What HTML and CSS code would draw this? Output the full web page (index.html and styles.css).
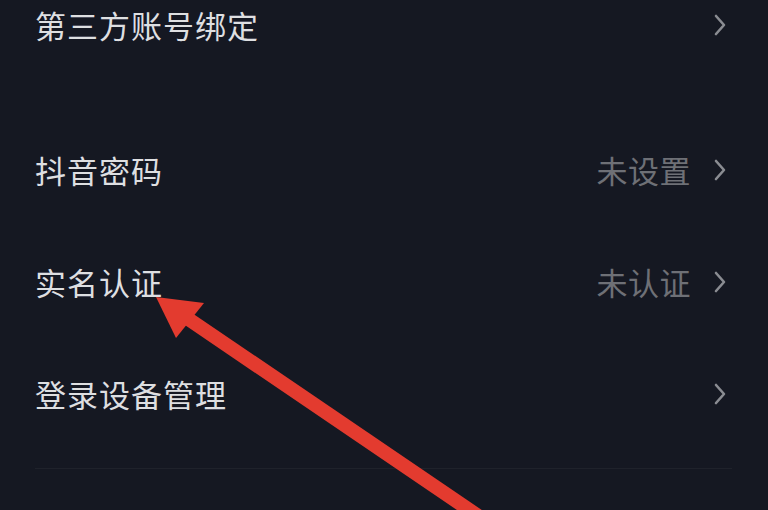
FILE: index.html
```html
<!DOCTYPE html>
<html lang="zh-CN">
<head>
<meta charset="utf-8">
<link rel="stylesheet" href="styles.css">
</head>
<body>
<div class="page">
  <div class="section">
    <div class="row">
      <span class="label">第三方账号绑定</span>
      <svg class="chev" viewBox="0 0 14 24" width="14" height="24"><path d="M3 3 L11 12 L3 21" fill="none" stroke="#8a8c92" stroke-width="2.6" stroke-linecap="round" stroke-linejoin="round"/></svg>
    </div>
  </div>
  <div class="gap"></div>
  <div class="section">
    <div class="row">
      <span class="label">抖音密码</span>
      <span class="value">未设置</span>
      <svg class="chev" viewBox="0 0 14 24" width="14" height="24"><path d="M3 3 L11 12 L3 21" fill="none" stroke="#8a8c92" stroke-width="2.6" stroke-linecap="round" stroke-linejoin="round"/></svg>
    </div>
    <div class="row">
      <span class="label">实名认证</span>
      <span class="value">未认证</span>
      <svg class="chev" viewBox="0 0 14 24" width="14" height="24"><path d="M3 3 L11 12 L3 21" fill="none" stroke="#8a8c92" stroke-width="2.6" stroke-linecap="round" stroke-linejoin="round"/></svg>
    </div>
    <div class="row">
      <span class="label">登录设备管理</span>
      <svg class="chev" viewBox="0 0 14 24" width="14" height="24"><path d="M3 3 L11 12 L3 21" fill="none" stroke="#8a8c92" stroke-width="2.6" stroke-linecap="round" stroke-linejoin="round"/></svg>
    </div>
  </div>
  <div class="divider"></div>
</div>
<svg class="arrow" viewBox="0 0 768 510" width="768" height="510">
  <line x1="184" y1="316" x2="490" y2="524" stroke="#e33b2f" stroke-width="14"/>
  <polygon points="156,297 204,303 176,338" fill="#e33b2f"/>
</svg>
</body>
</html>
```

FILE: styles.css
```css
html, body {
  margin: 0;
  padding: 0;
  background: #151822;
  width: 768px;
  height: 510px;
  overflow: hidden;
}

body {
  position: relative;
  font-family: "Noto Sans CJK SC", "Noto Sans", sans-serif;
}

.page {
  margin-top: -32px;
  padding: 0 41px 0 35px;
}

.row {
  display: flex;
  align-items: center;
  height: 112px;
}

.label {
  flex: 1;
  color: #dedfe1;
  font-size: 31px;
  letter-spacing: 1px;
  line-height: 1;
}

.value {
  color: #6e7076;
  font-size: 31px;
  letter-spacing: 0.5px;
  line-height: 1;
  margin-right: 22px;
}

.chev {
  display: block;
  flex: none;
  margin-top: 1px;
}

.gap {
  height: 33px;
}

.divider {
  margin-top: 19px;
  margin-right: -5px;
  height: 1px;
  background: #1f222b;
}

.arrow {
  position: absolute;
  left: 0;
  top: 0;
}
```
